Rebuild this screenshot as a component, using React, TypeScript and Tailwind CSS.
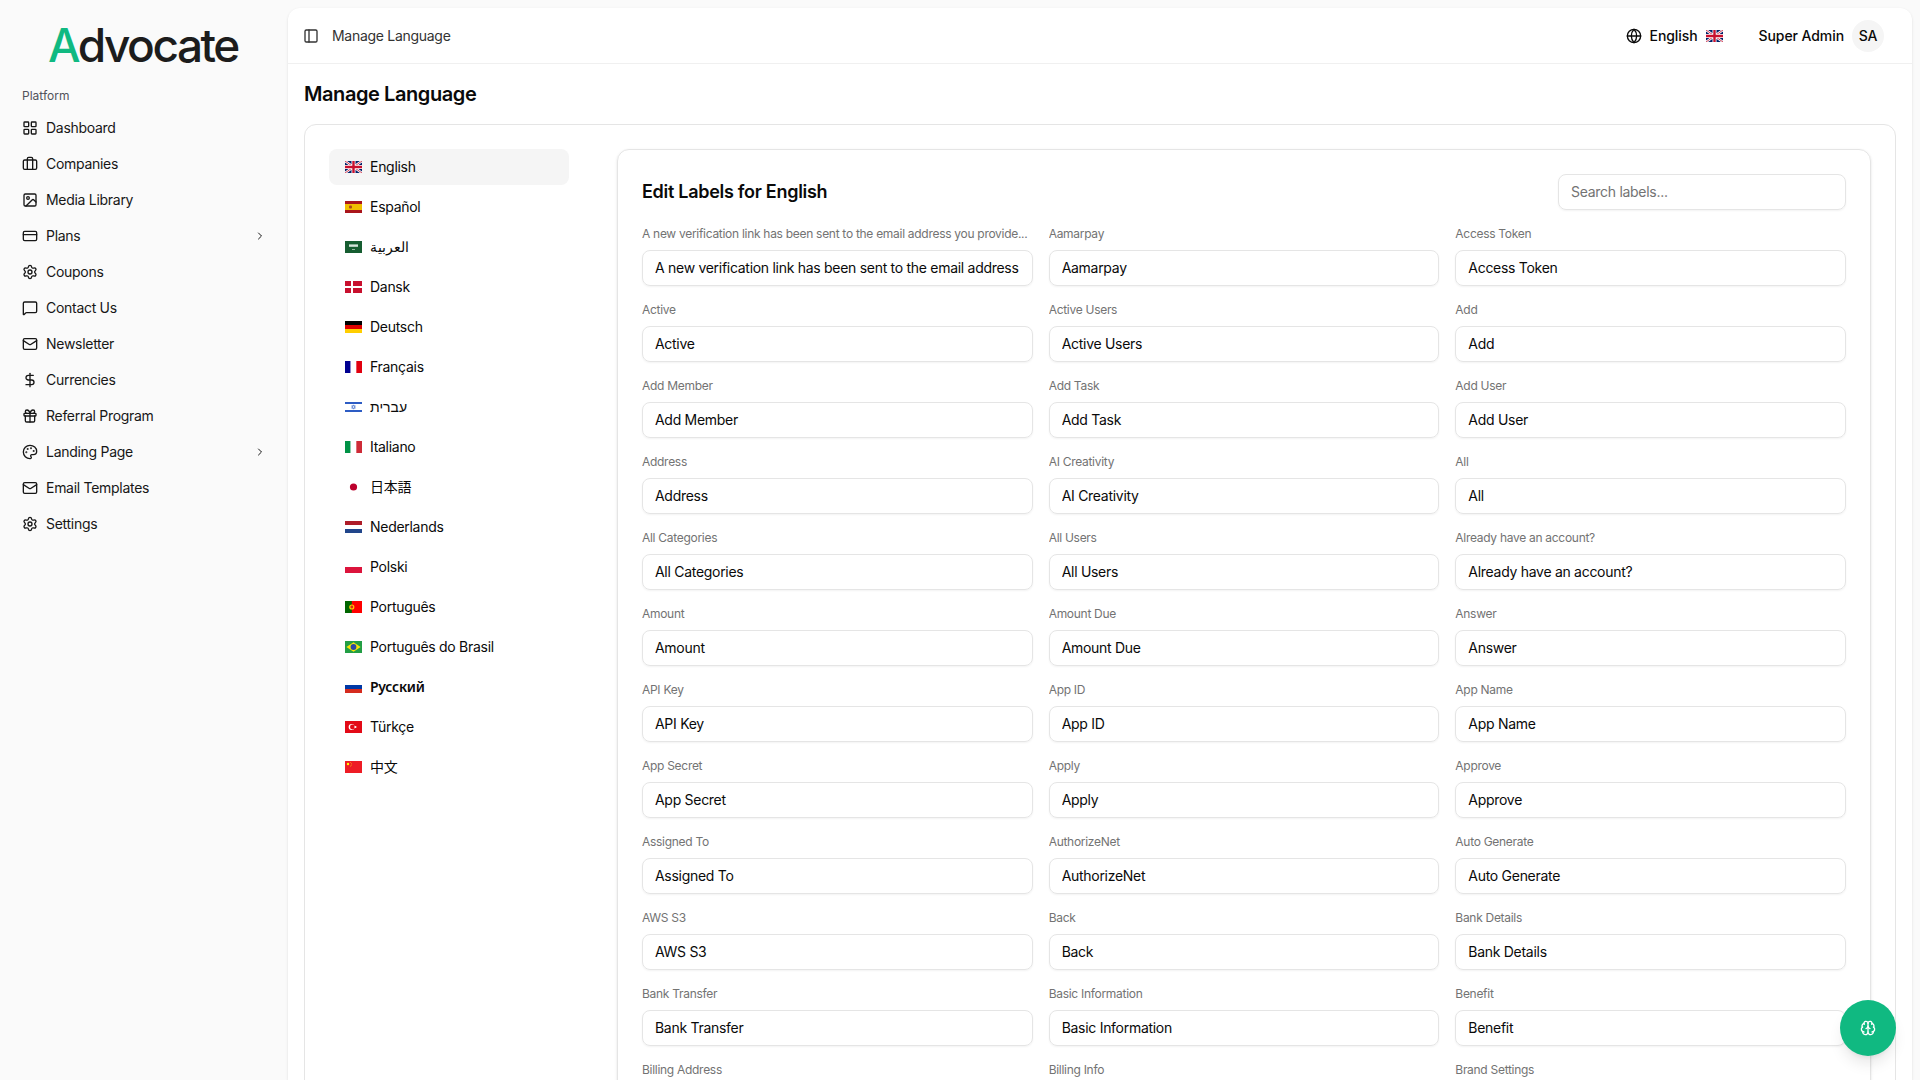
import { Briefcase, ChevronRight, CreditCard, DollarSign, Gift, Globe, Image, LayoutGrid, Mail, MessageSquare, Palette, PanelLeft, Settings, Brain } from "lucide-react";
import type { ReactNode } from "react";

const Svg = ({ children }: { children: ReactNode }) => (
  <svg viewBox="0 0 17 12" className="block w-[17px] h-[12px] shrink-0" preserveAspectRatio="none">{children}</svg>
);
const H = ({ c }: { c: string[] }) => (
  <Svg>{c.map((x, i) => <rect key={i} x="0" y={(12 / c.length) * i} width="17" height={12 / c.length} fill={x} />)}</Svg>
);
const V = ({ c }: { c: string[] }) => (
  <Svg>{c.map((x, i) => <rect key={i} y="0" x={(17 / c.length) * i} width={17 / c.length} height="12" fill={x} />)}</Svg>
);
const UK = () => (
  <Svg>
    <rect width="17" height="12" fill="#012169" />
    <path d="M0 0L17 12M17 0L0 12" stroke="#fff" strokeWidth="2.4" />
    <path d="M0 0L17 12M17 0L0 12" stroke="#c8102e" strokeWidth="0.8" />
    <path d="M8.5 0V12M0 6H17" stroke="#fff" strokeWidth="4" />
    <path d="M8.5 0V12M0 6H17" stroke="#c8102e" strokeWidth="2.4" />
  </Svg>
);
const flags: Record<string, ReactNode> = {
  en: <UK />,
  es: <Svg><rect width="17" height="12" fill="#aa151b" /><rect y="3" width="17" height="6" fill="#f1bf00" /><rect x="4" y="4.4" width="3" height="3.2" rx="1" fill="#ad4a1c" /></Svg>,
  ar: <Svg><rect width="17" height="12" fill="#165d31" /><rect x="4" y="3.4" width="9" height="2.4" fill="#d5e4da" /><rect x="7" y="8" width="3" height="0.7" fill="#cfe0d5" /></Svg>,
  da: <Svg><rect width="17" height="12" fill="#c8102e" /><rect x="6" width="2" height="12" fill="#fff" /><rect y="5" width="17" height="2" fill="#fff" /></Svg>,
  de: <H c={["#000000", "#dd0000", "#ffce00"]} />,
  fr: <V c={["#000091", "#ffffff", "#e1000f"]} />,
  he: <Svg><rect width="17" height="12" fill="#fff" /><rect y="1" width="17" height="2" fill="#2d5cc4" /><rect y="9" width="17" height="2" fill="#2d5cc4" /><path d="M8.5 3.8L10.4 7.2H6.6ZM8.5 8.2L6.6 4.8H10.4Z" fill="none" stroke="#2d5cc4" strokeWidth="0.5" /></Svg>,
  it: <V c={["#009246", "#ffffff", "#ce2b37"]} />,
  ja: <Svg><rect width="17" height="12" fill="#fff" /><circle cx="8.5" cy="6" r="3.6" fill="#bc002d" /></Svg>,
  nl: <H c={["#ae1c28", "#ffffff", "#21468b"]} />,
  pl: <H c={["#ffffff", "#dc143c"]} />,
  pt: <Svg><rect width="17" height="12" fill="#ff0000" /><rect width="6.8" height="12" fill="#006600" /><circle cx="6.8" cy="6" r="2.6" fill="#ffcc00" /><circle cx="6.8" cy="6" r="1.4" fill="#d52b1e" /></Svg>,
  br: <Svg><rect width="17" height="12" fill="#229e45" /><path d="M8.5 1.2L15.6 6L8.5 10.8L1.4 6Z" fill="#f8e509" /><circle cx="8.5" cy="6" r="2.9" fill="#2b49a3" /></Svg>,
  ru: <H c={["#ffffff", "#0039a6", "#d52b1e"]} />,
  tr: <Svg><rect width="17" height="12" fill="#e30a17" /><circle cx="6.6" cy="6" r="3" fill="#fff" /><circle cx="7.4" cy="6" r="2.4" fill="#e30a17" /><circle cx="10.4" cy="6" r="1.1" fill="#fff" /></Svg>,
  zh: <Svg><rect width="17" height="12" fill="#ee1c25" /><circle cx="3" cy="3" r="1.2" fill="#ffff00" /><circle cx="5.5" cy="1.4" r="0.4" fill="#ffff00" /><circle cx="6.4" cy="2.6" r="0.4" fill="#ffff00" /><circle cx="6.4" cy="4" r="0.4" fill="#ffff00" /><circle cx="5.5" cy="5" r="0.4" fill="#ffff00" /></Svg>,
};

const nav = [
  { label: "Dashboard", icon: LayoutGrid },
  { label: "Companies", icon: Briefcase },
  { label: "Media Library", icon: Image },
  { label: "Plans", icon: CreditCard, more: true },
  { label: "Coupons", icon: Settings },
  { label: "Contact Us", icon: MessageSquare },
  { label: "Newsletter", icon: Mail },
  { label: "Currencies", icon: DollarSign },
  { label: "Referral Program", icon: Gift },
  { label: "Landing Page", icon: Palette, more: true },
  { label: "Email Templates", icon: Mail },
  { label: "Settings", icon: Settings },
];

const langs = [
  ["en", "English"], ["es", "Español"], ["ar", "العربية"], ["da", "Dansk"], ["de", "Deutsch"], ["fr", "Français"],
  ["he", "עברית"], ["it", "Italiano"], ["ja", "日本語"], ["nl", "Nederlands"], ["pl", "Polski"], ["pt", "Português"],
  ["br", "Português do Brasil"], ["ru", "Русский"], ["tr", "Türkçe"], ["zh", "中文"],
];

const first = "A new verification link has been sent to the email address you provided during registration.";
const labels = [
  "A new verification link has been sent to the email address you provide...", "Aamarpay", "Access Token",
  "Active", "Active Users", "Add",
  "Add Member", "Add Task", "Add User",
  "Address", "AI Creativity", "All",
  "All Categories", "All Users", "Already have an account?",
  "Amount", "Amount Due", "Answer",
  "API Key", "App ID", "App Name",
  "App Secret", "Apply", "Approve",
  "Assigned To", "AuthorizeNet", "Auto Generate",
  "AWS S3", "Back", "Bank Details",
  "Bank Transfer", "Basic Information", "Benefit",
  "Billing Address", "Billing Info", "Brand Settings",
];

export default function App() {
  return (
    <div className="flex h-screen overflow-hidden bg-[#fafafa] text-[#0a0a0a] font-['Inter','Noto_Sans_CJK_JP',sans-serif] tracking-[-0.018em]">
      <aside className="w-[288px] shrink-0 flex flex-col">
        <div className="h-[80px] pl-[48px] pt-[13px] text-[46px] leading-[64px] font-medium text-[#1c1c1c] tracking-[-0.054em]">
          <span className="text-[#10b981]">A</span>dvocate
        </div>
        <div className="pl-[22px] h-[32px] flex items-center text-xs text-[#52525b] tracking-normal">Platform</div>
        <nav className="flex flex-col gap-1 pl-[22px] pr-[24px]">
          {nav.map((n) => (
            <div key={n.label} className="h-8 flex items-center gap-2 text-sm text-[#171717]">
              <n.icon size={16} strokeWidth={2} className="shrink-0" />
              <span className="flex-1">{n.label}</span>
              {n.more && <ChevronRight size={12} strokeWidth={2} className="shrink-0 translate-x-[2px]" />}
            </div>
          ))}
        </nav>
      </aside>
      <main className="flex-1 min-w-0 mt-2 mr-2 bg-white rounded-t-xl shadow-sm flex flex-col">
        <header className="h-14 shrink-0 border-b border-[#f0f0f0] flex items-center pl-[15px] pr-[28px]">
          <PanelLeft size={16} strokeWidth={2} className="text-[#333]" />
          <span className="ml-[13px] text-sm text-[#333]">Manage Language</span>
          <div className="ml-auto flex items-center tracking-[-0.005em]">
            <Globe size={16} strokeWidth={2} />
            <span className="ml-2 text-sm font-medium">English</span>
            <span className="ml-2"><UK /></span>
            <span className="ml-9 text-sm font-medium">Super Admin</span>
            <span className="ml-2 w-8 h-8 rounded-full bg-[#f5f5f5] flex items-center justify-center text-sm font-medium">SA</span>
          </div>
        </header>
        <div className="px-4 pt-4 flex-1 min-h-0">
          <h1 className="text-xl leading-7 font-semibold mb-4 tracking-[-0.021em]">Manage Language</h1>
          <div className="border border-[#e5e5e5] rounded-xl p-6 flex gap-12 items-start bg-white">
            <div className="w-[240px] shrink-0 flex flex-col gap-1">
              {langs.map(([code, name], i) => (
                <div key={code} className={`h-9 rounded-lg px-4 flex items-center gap-2 text-sm ${i === 0 ? "bg-[#f5f5f5]" : ""} ${code === "ru" ? "font-['Noto_Sans'] font-semibold tracking-[-0.02em]" : ""} ${code === "ar" || code === "he" ? "tracking-normal" : ""}`}>
                  {flags[code]}
                  <span>{name}</span>
                </div>
              ))}
            </div>
            <div className="flex-1 min-w-0 border border-[#e5e5e5] rounded-xl p-6 shadow-sm">
              <div className="flex items-center justify-between mb-4">
                <h2 className="text-lg font-semibold">Edit Labels for English</h2>
                <input readOnly placeholder="Search labels..." className="w-[288px] h-9 rounded-lg border border-[#e5e5e5] shadow-xs px-3 pb-[1px] text-sm outline-none placeholder:text-[#737373]" />
              </div>
              <div className="grid grid-cols-3 gap-4">
                {labels.map((l, i) => (
                  <div key={l} className="flex flex-col gap-2">
                    <label className="text-xs leading-4 text-[#737373] truncate">{l}</label>
                    <input readOnly value={i === 0 ? first : l} className="w-full h-9 rounded-lg border border-[#e5e5e5] shadow-xs px-3 pb-[1px] text-sm outline-none" />
                  </div>
                ))}
              </div>
            </div>
          </div>
        </div>
      </main>
      <button className="fixed right-[24px] bottom-[24px] w-14 h-14 rounded-full bg-[#10b981] text-white shadow-lg flex items-center justify-center">
        <Brain size={16} strokeWidth={2} />
      </button>
    </div>
  );
}
